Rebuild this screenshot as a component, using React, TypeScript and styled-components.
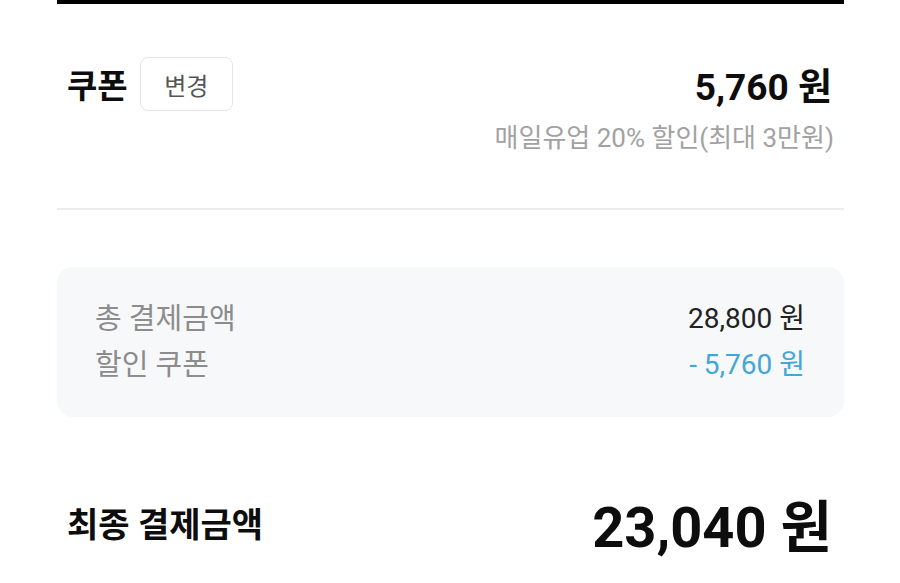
import React from 'react';
import styled, { createGlobalStyle } from 'styled-components';

// =============================================================================
// Constants
// =============================================================================

const FONT = `Roboto, "Noto Sans CJK KR", "Noto Sans", sans-serif`;
const BLACK = '#0d0d0d';
const LABEL_GRAY = '#8c8c8c';
const SUB_GRAY = '#a2a2a2';
const BLUE = '#44a6d6';

// =============================================================================
// Styled Components
// =============================================================================

const GlobalStyle = createGlobalStyle`
  html, body {
    margin: 0;
    padding: 0;
    background: #ffffff;
  }
  body {
    font-family: ${FONT};
    color: ${BLACK};
  }
`;

const Page = styled.main`
  width: 900px;
  height: 583px;
  overflow: hidden;
  box-sizing: border-box;
  padding: 0 56px 0 57px;
  background: #ffffff;
`;

const TopBar = styled.div`
  height: 4px;
  background: #000000;
`;

const CouponSection = styled.section`
  padding: 53px 12px 0 10px;
`;

const Row = styled.div`
  display: flex;
  align-items: center;
  justify-content: space-between;
`;

const TitleGroup = styled.div`
  display: flex;
  align-items: center;
  gap: 12px;
`;

const Title = styled.h2<{ $size: number }>`
  margin: 0;
  font-size: ${(p) => p.$size}px;
  font-weight: 700;
  color: ${BLACK};
`;

const ChangeButton = styled.button`
  width: 93px;
  height: 54px;
  border: 1px solid #e4e4e4;
  border-radius: 8px;
  background: #ffffff;
  font-family: ${FONT};
  font-size: 24px;
  color: #555555;
  cursor: pointer;
`;

const Amount = styled.span<{ $size: number }>`
  font-size: ${(p) => p.$size}px;
  font-weight: 700;
  color: ${BLACK};
`;

const CouponNote = styled.p`
  margin: 11px -2px 0 0;
  text-align: right;
  font-size: 26px;
  line-height: 32px;
  color: ${SUB_GRAY};
`;

const Divider = styled.hr`
  margin: 54px 0 0;
  border: none;
  height: 2px;
  background: #ececec;
`;

const SummaryBox = styled.div`
  margin-top: 57px;
  padding: 26px 39px 32px 38px;
  background: #f7f8fa;
  border-radius: 16px;
`;

const SummaryRow = styled.div`
  display: flex;
  justify-content: space-between;
  align-items: center;
  height: 46px;
  font-size: 28px;
`;

const SummaryLabel = styled.span`
  font-size: 29px;
  color: ${LABEL_GRAY};
`;

const SummaryValue = styled.span<{ $discount?: boolean }>`
  color: ${(p) => (p.$discount ? BLUE : '#222222')};
`;

const FinalRow = styled(Row)`
  margin-top: 63px;
  height: 84px;
  padding: 0 12px 0 10px;
`;

// =============================================================================
// Main Component
// =============================================================================

const App = () => {
  return (
    <>
      <GlobalStyle />
      <Page>
        <TopBar />
        <CouponSection>
          <Row>
            <TitleGroup>
              <Title $size={33}>쿠폰</Title>
              <ChangeButton>변경</ChangeButton>
            </TitleGroup>
            <Amount $size={37}>5,760 원</Amount>
          </Row>
          <CouponNote>매일유업 20% 할인(최대 3만원)</CouponNote>
        </CouponSection>
        <Divider />
        <SummaryBox>
          <SummaryRow>
            <SummaryLabel>총 결제금액</SummaryLabel>
            <SummaryValue>28,800 원</SummaryValue>
          </SummaryRow>
          <SummaryRow>
            <SummaryLabel>할인 쿠폰</SummaryLabel>
            <SummaryValue $discount>- 5,760 원</SummaryValue>
          </SummaryRow>
        </SummaryBox>
        <FinalRow>
          <Title $size={34}>최종 결제금액</Title>
          <Amount $size={56}>23,040 원</Amount>
        </FinalRow>
      </Page>
    </>
  );
};

export default App;
